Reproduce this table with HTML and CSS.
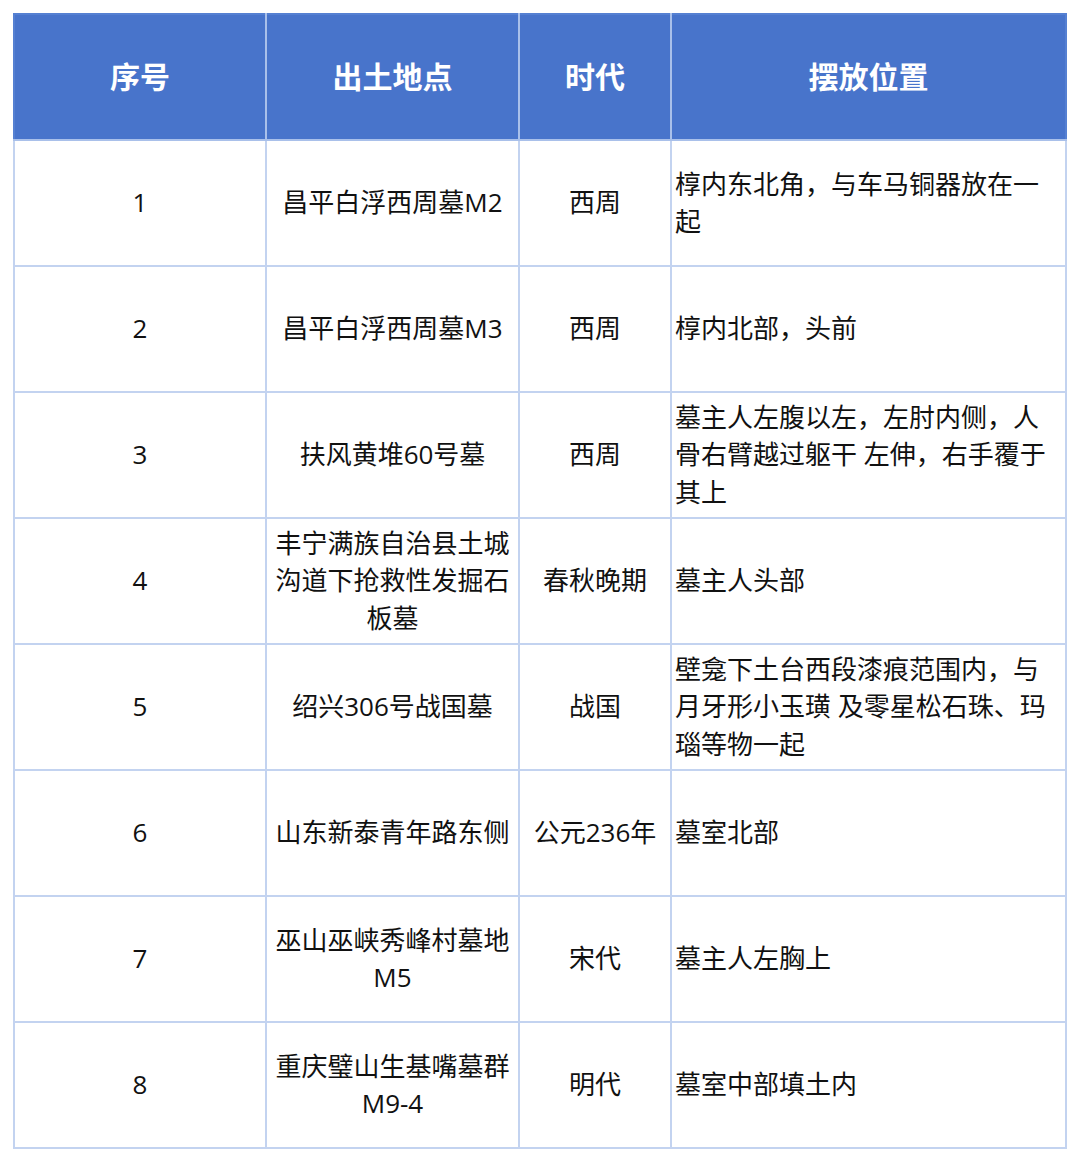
FILE: index.html
```html
<!DOCTYPE html>
<html lang="zh-CN">
<head>
<meta charset="utf-8">
<link rel="stylesheet" href="styles.css">
</head>
<body>
<table class="tbl">
  <colgroup>
    <col class="c1"><col class="c2"><col class="c3"><col class="c4">
  </colgroup>
  <thead>
    <tr class="head"><th>序号</th><th>出土地点</th><th>时代</th><th>摆放位置</th></tr>
  </thead>
  <tbody>
    <tr><td>1</td><td>昌平白浮西周墓M2</td><td>西周</td><td class="left">椁内东北角，与车马铜器放在一起</td></tr>
    <tr><td>2</td><td>昌平白浮西周墓M3</td><td>西周</td><td class="left">椁内北部，头前</td></tr>
    <tr><td>3</td><td>扶风黄堆60号墓</td><td>西周</td><td class="left">墓主人左腹以左，左肘内侧，人骨右臂越过躯干 左伸，右手覆于其上</td></tr>
    <tr><td>4</td><td>丰宁满族自治县土城沟道下抢救性发掘石板墓</td><td>春秋晚期</td><td class="left">墓主人头部</td></tr>
    <tr><td>5</td><td>绍兴306号战国墓</td><td>战国</td><td class="left">壁龛下土台西段漆痕范围内，与月牙形小玉璜 及零星松石珠、玛瑙等物一起</td></tr>
    <tr><td>6</td><td>山东新泰青年路东侧</td><td>公元236年</td><td class="left">墓室北部</td></tr>
    <tr><td>7</td><td>巫山巫峡秀峰村墓地M5</td><td>宋代</td><td class="left">墓主人左胸上</td></tr>
    <tr><td>8</td><td>重庆璧山生基嘴墓群M9-4</td><td>明代</td><td class="left">墓室中部填土内</td></tr>
  </tbody>
</table>
</body>
</html>
```
FILE: styles.css
```css
html, body {
  margin: 0;
  padding: 0;
  background: #ffffff;
}
body {
  padding: 13px 0 0 13px;
  font-family: "Open Sans", "Noto Sans CJK SC", sans-serif;
  color: #111111;
}
.tbl {
  border-collapse: collapse;
  table-layout: fixed;
  width: 1052px;
  border: 2px solid #5580d2;
}
.c1 { width: 252px; }
.c2 { width: 253px; }
.c3 { width: 152px; }
.c4 { width: 395px; }
.head th {
  background: #4874cb;
  color: #ffffff;
  font-weight: 700;
  font-size: 30px;
  height: 120px;
  padding: 0 0 4px 0;
  border: 2px solid #a9c0ea;
  border-top: none;
  text-align: center;
  vertical-align: middle;
}
.head th:first-child { border-left: none; }
.head th:last-child { border-right: none; }
td {
  height: 126px;
  padding: 0 5px;
  border: 2px solid #c3d3f0;
  font-size: 26px;
  line-height: 37.5px;
  text-align: center;
  vertical-align: middle;
  box-sizing: border-box;
  word-break: break-all;
}
td.left {
  text-align: left;
  padding-left: 3px;
}
```
